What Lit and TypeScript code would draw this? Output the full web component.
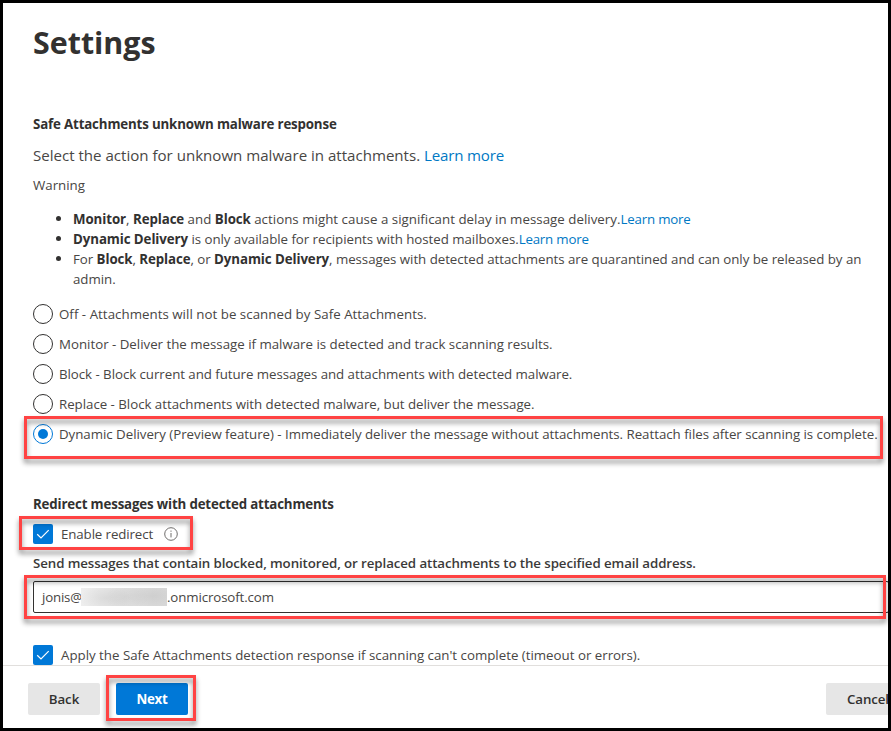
import { LitElement, html, css, svg, nothing } from "lit";
import { customElement, state } from "lit/decorators.js";
import { classMap } from "lit/directives/class-map.js";

interface Option {
  id: string;
  label: string;
}

const OPTIONS: Option[] = [
  { id: "off", label: "Off - Attachments will not be scanned by Safe Attachments." },
  { id: "monitor", label: "Monitor - Deliver the message if malware is detected and track scanning results." },
  { id: "block", label: "Block - Block current and future messages and attachments with detected malware." },
  { id: "replace", label: "Replace - Block attachments with detected malware, but deliver the message." },
  {
    id: "dynamic",
    label:
      "Dynamic Delivery (Preview feature) - Immediately deliver the message without attachments. Reattach files after scanning is complete.",
  },
];

const checkIcon = svg`<svg class="check" viewBox="0 0 20 20" width="20" height="20">
  <path d="M4.2 10.2 L8 13.9 L15.7 6.2" fill="none" stroke="#fff" stroke-width="1.2"/>
</svg>`;

const infoIcon = svg`<svg class="info" viewBox="0 0 14 14" width="14" height="14">
  <circle cx="7" cy="7" r="6.3" fill="none" stroke="#605e5c" stroke-width="0.9"/>
  <path d="M7 6 V10.4" stroke="#605e5c" stroke-width="0.9"/>
  <path d="M7 3.6 V4.7" stroke="#605e5c" stroke-width="1"/>
</svg>`;

@customElement("app-root")
export class AppRoot extends LitElement {
  @state() private selected = "dynamic";

  static styles = css`
    :host {
      display: block;
      font-family: "Open Sans", "Noto Sans", sans-serif;
      font-size: 13.3px;
      line-height: 20px;
      color: #484644;
    }
    * { box-sizing: border-box; }
    .frame {
      display: flex;
      flex-direction: column;
      width: 891px;
      height: 731px;
      border: 3px solid #000;
      background: #fff;
      overflow: hidden;
      white-space: nowrap;
    }
    .content {
      display: flex;
      flex-direction: column;
      height: 662px;
      padding: 20px 0 0 30px;
      flex: none;
    }
    h1, h2, p, ul { margin: 0; font-weight: 400; }
    h1 {
      font-size: 30.4px;
      line-height: 40px;
      font-weight: 700;
      color: #323130;
    }
    h2 {
      font-size: 13.3px;
      line-height: 20px;
      font-weight: 700;
      letter-spacing: -0.16px;
      color: #323130;
      margin-top: 50px;
    }
    h1 + h2 { margin-top: 51px; }
    b { font-weight: 700; color: #323130; letter-spacing: -0.09px; }
    a { color: #0078c4; text-decoration: none; }
    .lead { font-size: 15.1px; margin-top: 11px; letter-spacing: -0.01px; }
    .lead a { letter-spacing: -0.18px; }
    .warning { margin-top: 10px; }
    ul {
      list-style: none;
      padding: 0 20px 0 40px;
      margin-top: 14px;
      white-space: normal;
    }
    li { position: relative; letter-spacing: -0.04px; }
    li:first-child { letter-spacing: 0.025px; }
    li a { letter-spacing: -0.2px; }
    li::before {
      content: "";
      position: absolute;
      left: -17px;
      top: 7px;
      width: 5px;
      height: 5px;
      border-radius: 50%;
      background: #323130;
    }
    .options { display: flex; flex-direction: column; gap: 10px; margin-top: 15px; }
    .option { position: relative; display: flex; gap: 6px; height: 20px; letter-spacing: -0.03px; }
    .off { letter-spacing: 0.03px; }
    .monitor { letter-spacing: -0.01px; }
    .block { letter-spacing: -0.05px; }
    .radio {
      display: grid;
      place-items: center;
      width: 20px;
      height: 20px;
      border: 1px solid #323130;
      border-radius: 50%;
      flex: none;
    }
    .on .radio { border-color: #0078d7; }
    .dot { width: 10px; height: 10px; border-radius: 50%; background: #0078d7; }
    .row { position: relative; display: flex; align-items: center; height: 20px; flex: none; }
    .box {
      width: 20px;
      height: 20px;
      margin-right: 8px;
      border-radius: 2px;
      background: #0078d7;
      flex: none;
    }
    .check { display: block; }
    .enable { margin-top: 10px; letter-spacing: -0.11px; }
    .info { margin: -1px 0 0 11px; }
    .label { margin-top: 9px; font-weight: 600; letter-spacing: -0.092px; color: #3b3a39; }
    .field {
      position: relative;
      display: flex;
      align-items: center;
      width: 856px;
      height: 32px;
      margin-top: 8px;
      padding-left: 8px;
      border: 1px solid #323130;
      border-radius: 2px;
      flex: none;
    }
    .user { width: 39px; letter-spacing: -0.2px; }
    .masked {
      width: 86px;
      height: 18px;
      background:
        radial-gradient(ellipse 26px 12px at 24px 10px, rgba(0, 0, 0, 0.05), transparent),
        radial-gradient(ellipse 22px 13px at 46px 9px, rgba(0, 0, 0, 0.04), transparent),
        radial-gradient(ellipse 26px 14px at 72px 8px, rgba(0, 0, 0, 0.06), transparent),
        linear-gradient(90deg, #eeeeee, #dfdfdf 50%, #dadada);
    }
    .domain { letter-spacing: -0.12px; }
    .apply { margin-top: 32px; letter-spacing: -0.005px; }
    footer {
      display: flex;
      align-items: flex-start;
      height: 63px;
      padding: 17px 0 0 25px;
      border-top: 1px solid #e1dfdd;
      flex: none;
    }
    .btn {
      width: 72px;
      height: 32px;
      padding: 0;
      border: 0;
      border-radius: 2px;
      background: #e6e6e6;
      color: #323130;
      font: 600 13.3px/32px "Open Sans", "Noto Sans", sans-serif;
      letter-spacing: -0.1px;
      text-align: center;
      flex: none;
    }
    .primary { background: #0078d7; color: #fff; font-weight: 700; letter-spacing: -0.25px; }
    .next { position: relative; margin: 0 638px 0 16px; height: 32px; }
    .cancel { width: 84px; }
    .mark {
      position: absolute;
      border: 3px solid #ff4343;
      filter: drop-shadow(0 4px 2.5px rgba(0, 0, 0, 0.45));
      pointer-events: none;
      z-index: 1;
    }
    .option .mark { left: -9px; top: -8px; width: 859px; height: 43px; }
    .enable .mark { left: -14px; top: -8px; width: 174px; height: 34px; }
    .field .mark { left: -10px; top: -7px; width: 862px; height: 44px; }
    .next .mark { left: -10px; top: -8px; width: 90px; height: 46px; }
  `;

  private renderOption(o: Option) {
    const on = o.id === this.selected;
    return html`<div
      class=${classMap({ option: true, [o.id]: true, on })}
      role="radio"
      aria-checked=${on}
      @click=${() => (this.selected = o.id)}
    >
      <span class="radio">${on ? html`<span class="dot"></span>` : nothing}</span>
      <span>${o.label}</span>
      ${o.id === "dynamic" ? html`<div class="mark"></div>` : nothing}
    </div>`;
  }

  render() {
    return html`<div class="frame">
      <main class="content">
        <h1>Settings</h1>
        <h2>Safe Attachments unknown malware response</h2>
        <p class="lead">Select the action for unknown malware in attachments. <a>Learn more</a></p>
        <p class="warning">Warning</p>
        <ul>
          <li><b>Monitor</b>, <b>Replace</b> and <b>Block</b> actions might cause a significant delay in message delivery.<a>Learn more</a></li>
          <li><b>Dynamic Delivery</b> is only available for recipients with hosted mailboxes.<a>Learn more</a></li>
          <li>For <b>Block</b>, <b>Replace</b>, or <b>Dynamic Delivery</b>, messages with detected attachments are quarantined and can only be released by an admin.</li>
        </ul>
        <div class="options" role="radiogroup">${OPTIONS.map((o) => this.renderOption(o))}</div>
        <h2>Redirect messages with detected attachments</h2>
        <div class="row enable">
          <span class="box">${checkIcon}</span><span>Enable redirect</span>${infoIcon}
          <div class="mark"></div>
        </div>
        <p class="label">Send messages that contain blocked, monitored, or replaced attachments to the specified email address.</p>
        <div class="field">
          <span class="user">jonis@</span><span class="masked"></span><span class="domain">.onmicrosoft.com</span>
          <div class="mark"></div>
        </div>
        <div class="row apply">
          <span class="box">${checkIcon}</span><span>Apply the Safe Attachments detection response if scanning can't complete (timeout or errors).</span>
        </div>
      </main>
      <footer>
        <button class="btn">Back</button>
        <div class="next"><button class="btn primary">Next</button><div class="mark"></div></div>
        <button class="btn cancel">Cancel</button>
      </footer>
    </div>`;
  }
}
